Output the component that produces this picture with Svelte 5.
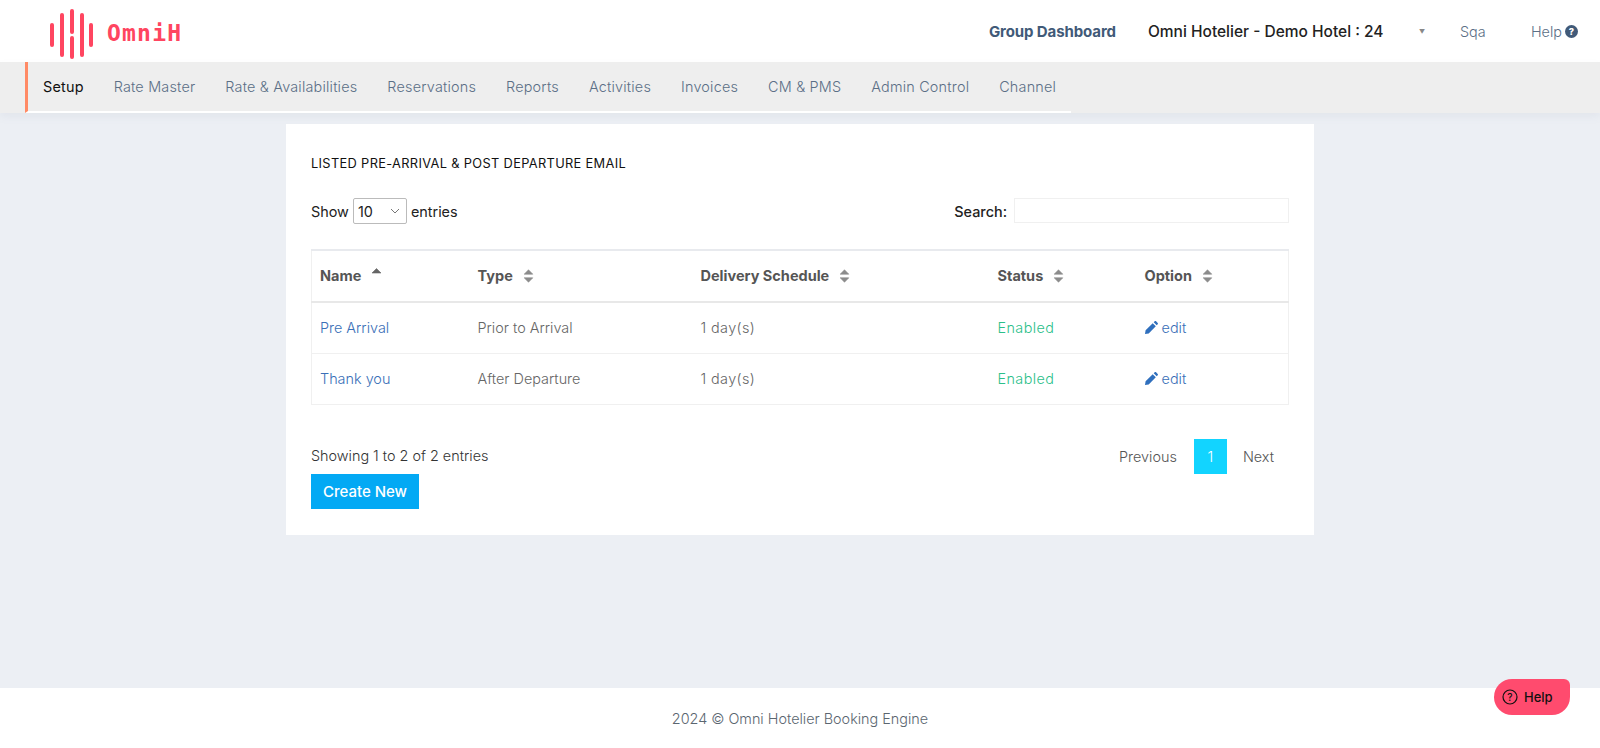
<script>
  const navItems = ['Setup','Rate Master','Rate & Availabilities','Reservations','Reports','Activities','Invoices','CM & PMS','Admin Control','Channel'];
  const cols = ['Name','Type','Delivery Schedule','Status','Option'];
  const rows = [
    { name:'Pre Arrival', type:'Prior to Arrival' },
    { name:'Thank you', type:'After Departure' }
  ];
</script>

<div class="page">
  <header class="top">
    <div class="brand">
      <svg class="bars" width="48" height="52" viewBox="0 0 48 52" aria-hidden="true">
        <g stroke="#ff4560" stroke-width="4" stroke-linecap="round">
          <line x1="4" y1="18" x2="4" y2="38"/>
          <line x1="14" y1="8" x2="14" y2="48"/>
          <line x1="24" y1="4" x2="24" y2="25"/>
          <line x1="24" y1="31" x2="24" y2="50"/>
          <line x1="34" y1="8" x2="34" y2="48"/>
          <line x1="43" y1="18" x2="43" y2="38"/>
        </g>
      </svg>
      <span class="wordmark">OmniH</span>
    </div>
    <div class="top-right">
      <a class="dash" href="#a">Group Dashboard</a>
      <span class="hotel">Omni Hotelier - Demo Hotel : 24</span>
      <span class="caret">▼</span>
      <span class="sqa">Sqa</span>
      <span class="help">Help
        <svg width="13" height="13" viewBox="0 0 24 24" aria-hidden="true"><circle cx="12" cy="12" r="12" fill="#415a78"/><text x="12" y="18" text-anchor="middle" font-size="17" font-weight="800" font-family="Inter, sans-serif" fill="#fff">?</text></svg>
      </span>
    </div>
  </header>

  <nav class="nav">
    <ul>
      {#each navItems as item, i}
        <li class:active={i === 0}>{item}</li>
      {/each}
    </ul>
  </nav>

  <main class="main">
    <section class="card">
      <h1>LISTED PRE-ARRIVAL &amp; POST DEPARTURE EMAIL</h1>
      <div class="controls">
        <div class="show">Show
          <span class="select">10
            <svg width="10" height="6" viewBox="0 0 10 6" aria-hidden="true"><path d="M1 1l4 4 4-4" fill="none" stroke="#777" stroke-width="1"/></svg>
          </span>
          entries
        </div>
        <div class="search">Search: <span class="input"></span></div>
      </div>

      <table>
        <colgroup><col class="c1"/><col class="c2"/><col class="c3"/><col class="c4"/><col class="c5"/></colgroup>
        <thead>
          <tr>
            {#each cols as c, i}
              <th>
                <span class="th">{c}
                  {#if i === 0}
                    <svg class="sort up" width="11" height="12" viewBox="0 0 10 12" aria-hidden="true"><path d="M5 1.500l4.500 4.500h-9z" fill="#666" stroke="#666" stroke-width=".6" stroke-linejoin="round"/></svg>
                  {:else}
                    <svg class="sort" width="11" height="14" viewBox="0 0 10 13" aria-hidden="true"><path d="M5 .8l4 4h-8zM5 12.200l-4-4h8z" fill="#8c8c8c" stroke="#8c8c8c" stroke-width=".6" stroke-linejoin="round"/></svg>
                  {/if}
                </span>
              </th>
            {/each}
          </tr>
        </thead>
        <tbody>
          {#each rows as r}
            <tr>
              <td><a class="link" href="#a">{r.name}</a></td>
              <td>{r.type}</td>
              <td class="days">1 day(s)</td>
              <td class="ok">Enabled</td>
              <td>
                <a class="link edit" href="#a">
                  <svg width="13" height="13" viewBox="0 0 13 13" aria-hidden="true"><path d="M0 13l.6-3.700L7.700 2.200l3.100 3.100-7.100 7.100zM8.700 1.300L9.700.3c.4-.4 1-.4 1.400 0l1.600 1.600c.4.4.4 1 0 1.400l-1 1z" fill="#2f6fbd"/></svg>
                  edit
                </a>
              </td>
            </tr>
          {/each}
        </tbody>
      </table>

      <div class="foot">
        <div class="left">
          <div class="info">Showing 1 to 2 of 2 entries</div>
          <button class="create">Create New</button>
        </div>
        <div class="pager">
          <span class="pg">Previous</span>
          <span class="pg cur">1</span>
          <span class="pg nx">Next</span>
        </div>
      </div>
    </section>
  </main>

  <footer class="footer">2024 © Omni Hotelier Booking Engine</footer>

  <button class="fab">
    <svg width="16" height="16" viewBox="0 0 16 16" aria-hidden="true"><circle cx="8" cy="8" r="7" fill="none" stroke="#111" stroke-width="1.200"/><text x="8" y="11.500" text-anchor="middle" font-size="10" font-family="Inter, sans-serif" fill="#111">?</text></svg>
    Help
  </button>
</div>

<style>
  :global(body) { margin: 0; background: #eceff4; font-family: "Inter", "Open Sans", sans-serif; }
  .page { height: 748px; display: flex; flex-direction: column; position: relative; overflow: hidden; font-size: 14.400px; color: #222; }

  .top { height: 62px; flex: none; background: #fff; display: flex; align-items: center; justify-content: space-between; padding: 0 22px 0 48px; box-sizing: border-box; }
  .brand { display: flex; align-items: center; gap: 11px; }
  .bars { display: block; margin-top: 4px; }
  .wordmark { font-family: "DejaVu Sans Mono", monospace; font-weight: 700; font-size: 23px; letter-spacing: 1.200px; color: #ff4560; margin-top: 3px; }
  .top-right { display: flex; align-items: center; }
  .dash { font-weight: 700; font-size: 15px; color: #415a78; text-decoration: none; margin-right: 32px; letter-spacing: -.1px; white-space: nowrap; }
  .hotel { font-size: 15.500px; font-weight: 500; color: #222; width: 273px; white-space: nowrap; }
  .caret { font-size: 6px; color: #888; width: 41px; margin-left: -2px; }
  .sqa { font-weight: 300; color: #5b6f86; width: 71px; }
  .help { font-weight: 300; color: #5b6f86; display: inline-flex; align-items: center; gap: 3px; }

  .nav { height: 51px; flex: none; background: #eee; box-shadow: 0 4px 8px rgba(120,130,150,.08); }
  .nav ul { margin: 0 0 0 25px; padding: 0 15px 0 15px; list-style: none; display: inline-flex; gap: 30px; height: 100%; box-sizing: border-box; border-left: 3px solid #ff8a65; border-bottom: 2px solid #fff; align-items: center; }
  .nav li { font-size: 14.400px; font-weight: 300; letter-spacing: .2px; color: #5b6f86; white-space: nowrap; }
  .nav li.active { color: #111; font-weight: 400; }

  .main { flex: 1; display: flex; justify-content: center; align-items: flex-start; padding-top: 11px; }
  .card { width: 1028px; height: 411px; background: #fff; box-sizing: border-box; padding: 0 25px; }
  h1 { margin: 0; padding-top: 31px; font-size: 12.800px; font-weight: 400; letter-spacing: .35px; color: #111; line-height: 17px; }
  .controls { display: flex; justify-content: space-between; align-items: center; margin-top: 26px; color: #222; font-weight: 400; }
  .show { display: flex; align-items: center; gap: 4px; }
  .select { width: 54px; height: 26px; box-sizing: border-box; border: 1px solid #bbb; border-radius: 2px; display: flex; align-items: center; justify-content: space-between; padding: 0 6px 0 4px; }
  .search { display: flex; align-items: center; gap: 7px; font-weight: 500; }
  .input { width: 275px; height: 25px; box-sizing: border-box; border: 1px solid #f0f0f0; display: block; margin-top: -1px; }

  table { width: 100%; table-layout: fixed; border-collapse: collapse; margin-top: 25px; border: 1px solid #f0f0f0; border-top: 2px solid #e8eaee; }
  .c1 { width: 158px; } .c2 { width: 223px; } .c3 { width: 297px; } .c4 { width: 147px; }
  th { height: 52px; padding: 0 0 1px 8px; box-sizing: border-box; text-align: left; font-size: 14.500px; font-weight: 700; color: #555; border-bottom: 2px solid #e8e8e8; }
  .th { display: inline-flex; align-items: center; gap: 10px; }
  .sort.up { margin-top: -6px; }
  td { height: 51px; padding: 0 0 1px 8px; box-sizing: border-box; font-weight: 300; color: #666; border-bottom: 1px solid #f0f0f0; }
  .link { color: #3a6fb7; text-decoration: none; }
  .ok { color: #2cc08a; letter-spacing: .4px; }
  .days { letter-spacing: .4px; }
  .edit svg { vertical-align: -1px; }

  .foot { display: flex; justify-content: space-between; margin-top: 34px; }
  .info { font-weight: 300; color: #333; line-height: 20px; margin-top: 7px; }
  .create { display: block; margin-top: 8px; width: 108px; height: 35px; background: #03a9f4; color: #fff; border: 0; font: 500 15px "Inter", sans-serif; padding: 0; }
  .pager { display: flex; height: 35px; align-items: center; }
  .pg { font-weight: 300; color: #555; padding: 0 15px; line-height: 35px; }
  .pg.nx { padding-left: 14px; }
  .pg.cur { background: #12d4ff; color: #fff; width: 33px; padding: 0; text-align: center; box-sizing: border-box; margin: 0 2px; }

  .footer { height: 60px; flex: none; background: #fff; display: flex; align-items: center; justify-content: center; font-weight: 300; color: #5b6670; font-size: 14.400px; }
  .fab { position: absolute; left: 1494px; top: 679px; width: 76px; height: 36px; background: #ff4b6e; border: 0; border-radius: 18px 6px 18px 18px; display: flex; align-items: center; gap: 6px; padding: 0 0 0 8px; font: 500 13px "Inter", sans-serif; color: #111; }
</style>
